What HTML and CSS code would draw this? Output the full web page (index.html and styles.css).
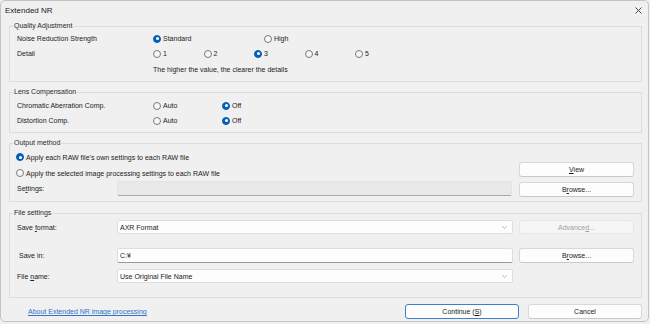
FILE: index.html
```html
<!DOCTYPE html>
<html>
<head>
<meta charset="utf-8">
<link rel="stylesheet" href="styles.css">
</head>
<body>
<div class="window">
  <div class="titlebar">
    <span class="title">Extended NR</span>
    <svg class="close" width="7" height="7" viewBox="0 0 7 7"><path d="M0.5 0.5L6.5 6.5M6.5 0.5L0.5 6.5" stroke="#333" stroke-width="0.9" fill="none"/></svg>
  </div>
  <div class="content">
    <fieldset class="group g-quality">
      <legend>Quality Adjustment</legend>
      <div class="row">
        <span class="label">Noise Reduction Strength</span>
        <div class="options">
          <span class="opt w-std"><span class="radio on"></span>Standard</span>
          <span class="opt"><span class="radio"></span>High</span>
        </div>
      </div>
      <div class="row">
        <span class="label">Detail</span>
        <div class="options">
          <span class="opt w-det"><span class="radio"></span>1</span>
          <span class="opt w-det"><span class="radio"></span>2</span>
          <span class="opt w-det"><span class="radio on"></span>3</span>
          <span class="opt w-det"><span class="radio"></span>4</span>
          <span class="opt w-det"><span class="radio"></span>5</span>
        </div>
      </div>
      <div class="row help-row">
        <span class="label"></span>
        <span class="help">The higher the value, the clearer the details</span>
      </div>
    </fieldset>

    <fieldset class="group g-lens">
      <legend>Lens Compensation</legend>
      <div class="row">
        <span class="label">Chromatic Aberration Comp.</span>
        <div class="options">
          <span class="opt w-auto"><span class="radio"></span>Auto</span>
          <span class="opt"><span class="radio on"></span>Off</span>
        </div>
      </div>
      <div class="row">
        <span class="label">Distortion Comp.</span>
        <div class="options">
          <span class="opt w-auto"><span class="radio"></span>Auto</span>
          <span class="opt"><span class="radio on"></span>Off</span>
        </div>
      </div>
    </fieldset>

    <fieldset class="group g-output">
      <legend>Output method</legend>
      <div class="output-grid">
        <div class="output-left">
          <span class="opt out-opt"><span class="radio on"></span>Apply each RAW file's own settings to each RAW file</span>
          <span class="opt out-opt"><span class="radio"></span>Apply the selected image processing settings to each RAW file</span>
          <div class="settings-row">
            <span class="flabel">Se<u>t</u>tings:</span>
            <div class="field disabled"></div>
          </div>
        </div>
        <div class="output-right">
          <div class="btn"><u>V</u>iew</div>
          <div class="btn">B<u>r</u>owse...</div>
        </div>
      </div>
    </fieldset>

    <fieldset class="group g-file">
      <legend>File settings</legend>
      <div class="file-grid">
        <span class="flabel">Save <u>f</u>ormat:</span>
        <div class="field select"><span>AXR Format</span><svg class="chev" width="5" height="3" viewBox="0 0 5 3"><path d="M0.3 0.3L2.5 2.5L4.7 0.3" stroke="#888" stroke-width="0.6" fill="none"/></svg></div>
        <div class="btn btn-disabled">Advance<u>d</u>...</div>

        <span class="flabel saveinlabel">Save in:</span>
        <div class="field text saveinfield"><span>C:¥</span></div>
        <div class="btn saveinfield">B<u>r</u>owse...</div>

        <span class="flabel">File <u>n</u>ame:</span>
        <div class="field select"><span>Use Original File Name</span><svg class="chev" width="5" height="3" viewBox="0 0 5 3"><path d="M0.3 0.3L2.5 2.5L4.7 0.3" stroke="#888" stroke-width="0.6" fill="none"/></svg></div>
        <span></span>
      </div>
    </fieldset>

    <div class="footer">
      <a class="link" href="#">About Extended NR image processing</a>
      <div class="footer-btns">
        <div class="btn btn-main focused">Continue (<u>S</u>)</div>
        <div class="btn btn-main">Cancel</div>
      </div>
    </div>
  </div>
</div>
</body>
</html>
```

FILE: styles.css
```css
* { box-sizing: border-box; }
html, body {
  margin: 0;
  padding: 0;
  background: #f0f0f0;
}
body {
  width: 650px;
  height: 324px;
  font-family: "Liberation Sans", Arial, sans-serif;
  font-size: 7px;
  color: #222;
}
.window {
  width: 649px;
  height: 322px;
  border: 1px solid #c4c4c4;
  border-radius: 5px;
  background: #f0f0f0;
  overflow: hidden;
}
.titlebar {
  height: 20px;
  display: flex;
  align-items: center;
  justify-content: space-between;
  padding: 0 6px 1px 4px;
}
.title {
  font-size: 8px;
  color: #1a1a1a;
}
.close { display: block; }

.content {
  padding: 0 6px 0 8px;
}
.group {
  margin: 0;
  border: 1px solid #dcdcdc;
  padding: 0 7px 4px 7px;
  min-width: 0;
}
.group legend {
  font-size: 7px;
  line-height: 10px;
  padding: 0 1px;
  margin-left: -4px;
  color: #2a2a2a;
}
.g-lens, .g-output { margin-top: 5px; }
.g-file { margin-top: 6px; padding-bottom: 14px; }

.row {
  display: flex;
  align-items: center;
  height: 15px;
}
.g-lens .row:first-of-type { margin-top: 1px; }
.label {
  width: 136px;
  flex: none;
}
.options {
  display: flex;
  align-items: center;
}
.opt {
  display: flex;
  align-items: center;
  gap: 2px;
  white-space: nowrap;
}
.w-std { width: 111px; }
.w-det { width: 50.5px; }
.w-auto { width: 69px; }
.help-row { height: 16px; padding-top: 1px; }

.radio {
  width: 8px;
  height: 8px;
  border-radius: 50%;
  border: 1px solid #7a7a7a;
  background: #f7f7f7;
  display: flex;
  align-items: center;
  justify-content: center;
  flex: none;
}
.radio.on {
  background: #005fb8;
  border-color: #005fb8;
}
.radio.on::after {
  content: "";
  width: 3px;
  height: 3px;
  border-radius: 50%;
  background: #fff;
}

.output-grid {
  display: grid;
  grid-template-columns: 1fr 115px;
  column-gap: 7px;
}
.output-left {
  display: flex;
  flex-direction: column;
  padding-top: 3px;
  gap: 4px;
}
.out-opt {
  height: 12px;
  margin-left: -1px;
}
.settings-row {
  display: flex;
  align-items: center;
  margin-top: -2px;
}
.flabel {
  width: 100px;
  flex: none;
}
.output-right {
  display: flex;
  flex-direction: column;
  gap: 5px;
  padding-top: 14px;
}

.field {
  height: 15px;
  flex: 1;
  border: 1px solid #dedede;
  border-radius: 2px;
  background: #fdfdfd;
  display: flex;
  align-items: center;
  justify-content: space-between;
  padding: 0 5px 0 2px;
}
.field.disabled {
  background: #e9e9e9;
  border-color: #e2e2e2;
  border-bottom: 1px solid #a8a8a8;
}
.field.text {
  border-bottom: 1px solid #9a9a9a;
}
.select { height: 14px; }
.chev { display: block; }

.btn {
  height: 15px;
  border: 1px solid #d8d8d8;
  border-bottom-color: #c8c8c8;
  border-radius: 3px;
  background: #fdfdfd;
  display: flex;
  align-items: center;
  justify-content: center;
  color: #1b1b1b;
}
.btn-disabled {
  height: 14px;
  background: #f6f6f6;
  border-color: #e6e6e6;
  color: #a0a0a0;
}

.file-grid {
  display: grid;
  grid-template-columns: 100px 1fr 121px;
  row-gap: 6px;
  align-items: center;
  padding-top: 2px;
}
.file-grid .btn { margin-left: 6px; }
.saveinlabel { padding-left: 2px; }
.saveinfield { margin-top: 8px; }
.file-grid > .flabel.saveinlabel { margin-top: 8px; }

.footer {
  display: flex;
  align-items: center;
  justify-content: space-between;
  padding-top: 6px;
}
.link {
  margin-left: 19px;
  color: #2f74c9;
  text-decoration: underline;
}
.footer-btns {
  display: flex;
  gap: 9px;
}
.btn-main { width: 114px; }
.focused {
  border: 1px solid #3a7fd0;
}
```
